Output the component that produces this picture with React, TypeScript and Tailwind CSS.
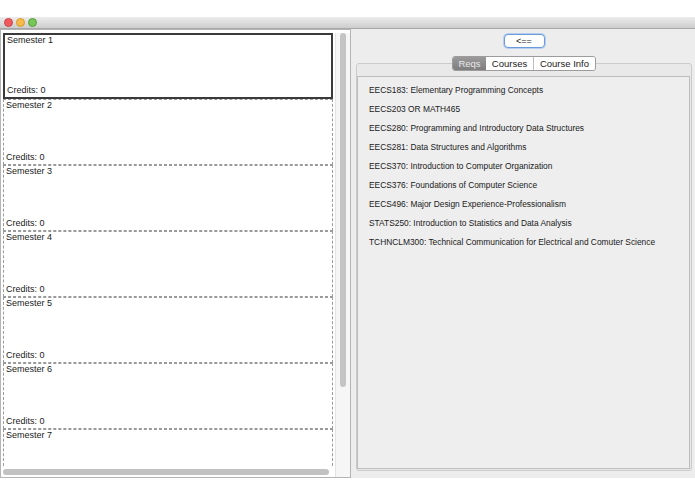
const reqs = [
  'EECS183: Elementary Programming Concepts',
  'EECS203 OR MATH465',
  'EECS280: Programming and Introductory Data Structures',
  'EECS281: Data Structures and Algorithms',
  'EECS370: Introduction to Computer Organization',
  'EECS376: Foundations of Computer Science',
  'EECS496: Major Design Experience-Professionalism',
  'STATS250: Introduction to Statistics and Data Analysis',
  'TCHNCLM300: Technical Communication for Electrical and Comuter Science',
];

const semesters = [1, 2, 3, 4, 5, 6, 7];

function TrafficLights() {
  return (
    <div className="flex items-center gap-[3px] pl-[4px]">
      <span className="h-[9px] w-[9px] rounded-full border border-[#c9464a] bg-[#f05a5e]" />
      <span className="h-[9px] w-[9px] rounded-full border border-[#d59a2a] bg-[#f6bb48]" />
      <span className="h-[9px] w-[9px] rounded-full border border-[#5a9d3a] bg-[#76c658]" />
    </div>
  );
}

function SemesterBox({ n }: { n: number }) {
  const selected = n === 1;
  return (
    <div
      className={`flex h-[66px] w-[330px] shrink-0 flex-col justify-between px-[2px] pb-[1px] leading-[11px] ${
        selected ? 'border-2 border-[#3a3a3a]' : 'border border-dashed border-[#9a9a9a]'
      }`}
    >
      <span>Semester {n}</span>
      {n < 7 && <span>Credits: 0</span>}
    </div>
  );
}

export default function App() {
  return (
    <div
      className="h-[494px] w-[695px] overflow-hidden bg-white text-[9px] text-[#1a1a1a]"
      style={{ fontFamily: '"Liberation Sans", Arial, sans-serif' }}
    >
      <div className="h-[17px]" />
      <div className="flex h-[461px] flex-col">
        <div className="flex h-[12px] shrink-0 items-center border-b border-[#a8a8a8] bg-gradient-to-b from-[#ececec] to-[#cdcdcd]">
          <TrafficLights />
        </div>
        <div className="flex min-h-0 flex-1 bg-[#ededed]">
          {/* semester list */}
          <div className="flex w-[351px] shrink-0 flex-col border border-[#b4b4b4] bg-white pt-[3px] pl-[2px]">
            <div className="flex min-h-0 flex-1">
              <div className="flex min-h-0 flex-1 flex-col">
                <div className="flex min-h-0 flex-1 flex-col overflow-hidden">
                  {semesters.map((n) => (
                    <SemesterBox key={n} n={n} />
                  ))}
                </div>
                <div className="flex h-[10px] shrink-0 items-center">
                  <div className="h-[6px] w-[326px] rounded-full bg-[#c2c2c2]" />
                </div>
              </div>
              <div className="flex w-[15px] shrink-0 flex-col items-center border-l border-[#e4e4e4] bg-[#f6f6f6]">
                <div className="h-[354px] w-[6px] rounded-full bg-[#c4c4c4]" />
              </div>
            </div>
          </div>

          {/* requirements */}
          <div className="flex min-h-0 flex-1 flex-col items-center pr-[3px] pb-[7px] pl-[5px]">
            <button className="mt-[5px] h-[14px] w-[41px] shrink-0 rounded-[4px] border border-[#6a9ad8] bg-white text-[9px] leading-none shadow-[0_0_0_1px_#b6cff0]">
              &lt;==
            </button>
            <div className="relative mt-[8px] flex min-h-0 w-full flex-1 flex-col">
              <div className="absolute top-0 left-1/2 z-10 flex h-[15px] -translate-x-1/2 overflow-hidden rounded-[3px] border border-[#9c9c9c] text-[9.5px] leading-none">
                <span className="flex w-[33px] items-center justify-center bg-gradient-to-b from-[#9a9a9a] to-[#7e7e7e] text-[#e8e8e8]">
                  Reqs
                </span>
                <span className="flex w-[48px] items-center justify-center border-r border-[#bdbdbd] bg-white">
                  Courses
                </span>
                <span className="flex w-[61px] items-center justify-center bg-white">Course Info</span>
              </div>
              <div className="mt-[7px] flex min-h-0 flex-1 flex-col rounded-[3px] border border-[#cbcbcb] bg-[#e9e9e9] pt-[12px] pr-[1px] pb-[1px]">
                <div className="flex min-h-0 flex-1 flex-col gap-[8px] border border-[#bdbdbd] bg-[#eeeeee] pt-[8px] pr-[10px] pl-[11px] text-[8.4px]">
                  {reqs.map((r) => (
                    <div key={r} className="h-[11px] leading-[11px]">
                      {r}
                    </div>
                  ))}
                </div>
              </div>
            </div>
          </div>
        </div>
      </div>
    </div>
  );
}
